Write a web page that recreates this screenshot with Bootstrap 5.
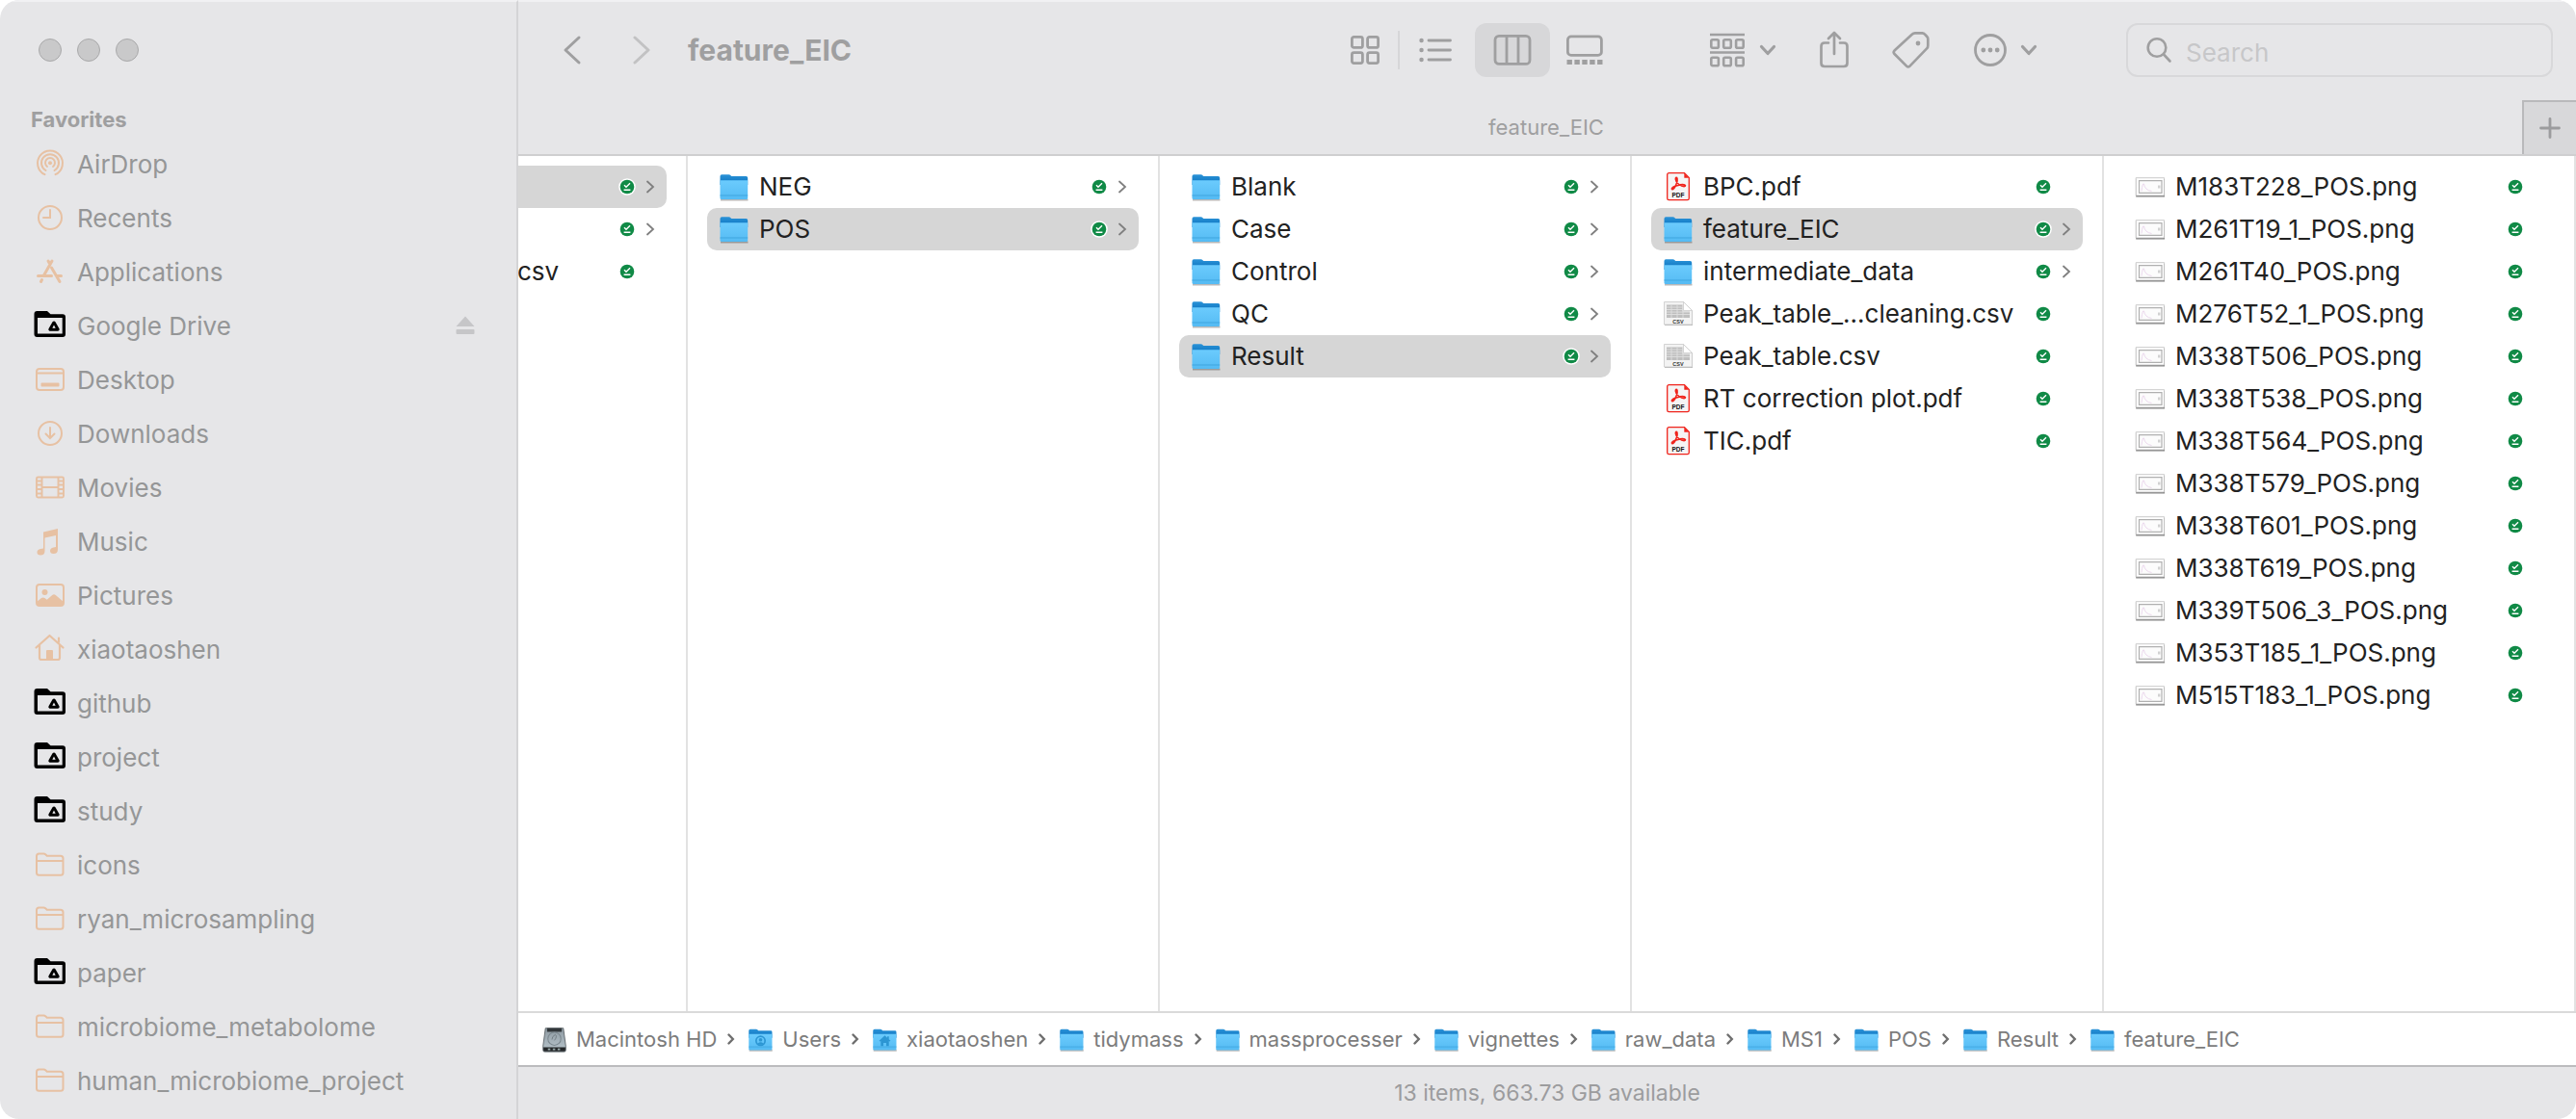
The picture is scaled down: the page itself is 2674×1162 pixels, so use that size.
<!DOCTYPE html>
<html lang="en">
<head>
<meta charset="utf-8">
<meta name="viewport" content="width=device-width, initial-scale=1">
<title>feature_EIC</title>
<link rel="stylesheet" href="https://cdn.jsdelivr.net/npm/bootstrap@5.3.0/dist/css/bootstrap.min.css">
<style>
:root{--chrome:#e6e6e8;--dim:#9f9fa0;--rule:#e2e2e2;--ink:#222;--sel:#d6d6d6}
body{font-family:Inter,"Liberation Sans",sans-serif;background:#fff;color:var(--ink)}
a{text-decoration:none;color:inherit}
svg{display:block;flex:none}
.finder{border-radius:20px;overflow:hidden;background:var(--chrome)}
.side{width:538px;flex:none;border-right:2px solid #d4d4d6;border-top:2px solid #f1f1f3;padding-top:38px}
.lights{padding-left:40px;gap:16px}
.light{width:24px;height:24px;border-radius:50%;background:#c9c9ca;border:1px solid #a9a9aa;padding:0}
.side-title{font-size:22px;line-height:32px;font-weight:700;color:var(--dim);padding-left:32px;margin:44px 0 2px}
.side-item{height:56px;padding-left:35px;gap:11px;font-size:26px;color:#959697}
.side-item svg{width:34px;height:34px;color:#e7c1a3}
.side-item svg.drive{color:#000}
.side-item .eject{padding:0;border:0;background:none;margin:0 43px 0 auto}
.side-item .eject svg{width:20px;height:20px;color:#c6c6c8}
.head{border-top:2px solid #f1f1f3;border-bottom:2px solid #cfcfd0}
.tools{height:102px;padding:0 24px 2px 46px;color:var(--dim)}
.tools button{padding:0;border:0;background:none;color:inherit;height:56px;display:flex;align-items:center;justify-content:center}
.nav-back,.nav-fwd{width:20px}
.nav-fwd{opacity:.5}
.navs{gap:52px}
.loc{font-size:30px;font-weight:700;line-height:40px;margin:0 0 0 38px}
.views{gap:16px;margin-right:108px}
.views .v-grid{width:36px}.views .v-gal{width:40px}
.views .v-list{width:46px;padding-right:5px}
.views .v-col{width:78px;border-radius:12px;background:#d7d7d9}
.sep{width:2px;height:40px;background:#d6d6d8}
.acts{gap:40px;margin-right:92px}
.acts button{gap:13px}
.find{width:443px;height:56px;border:2px solid #d8d8da;border-radius:12px;gap:14px;padding:0 18px}
.find input{border:0;background:none;outline:0;font-size:26px;min-width:0;flex:1;padding:4px 0 0;color:#777}
.find input::placeholder{color:#c7c7c9;opacity:1}
.tabs-bar{height:56px;color:var(--dim)}
.tab-label{font-size:22px;flex:1;text-align:center;padding-left:54px}
.tab-add{width:56px;height:56px;border:0;border-left:2px solid #b9b9bb;border-top:2px solid #b9b9bb;background:#d8d8da;color:#9c9c9e;padding:0;display:grid;place-items:center}
.browser{background:#fff}
.pane{width:490px;flex:none;padding:10px 20px;border-right:2px solid var(--rule)}
.pane-cut{width:176px;padding-left:0}
.pane-last{flex:1;min-width:0}
.rowx{height:44px;padding:0 12px;gap:10px;font-size:26px;border-radius:10px;white-space:nowrap;color:var(--ink)}
.pane-cut .rowx{padding-left:0;border-radius:0 10px 10px 0}
.rowx.on{background:var(--sel)}
.rowx .nm{flex:1;min-width:0;padding-bottom:2px}
.pane-cut .nm{margin-left:-1px}
.rowx .ic{width:32px;height:32px}
.rowx .ok{width:18px;height:18px}
.rowx .go{width:10px;height:14px;color:#7f7f7f}
.pathbar{background:#fff;border-top:2px solid #dadada;border-bottom:2px solid #bcbcbe;height:58px;padding-left:24px;font-size:22px;color:#7c7c7c}
.crumb{gap:9px;white-space:nowrap}
.crumb svg{width:27px;height:27px}
.crumb .sepv{width:8px;height:14px;margin:0 13px 0 2px;color:#6f6f6f}
.status{height:54px;font-size:23px;color:#9c9c9e}
</style>
<script src="https://cdn.jsdelivr.net/npm/bootstrap@5.3.0/dist/js/bootstrap.bundle.min.js"></script>
</head>
<body>
<svg width="0" height="0" class="position-absolute" aria-hidden="true">
<defs>
<linearGradient id="gf" x1="0" y1="0" x2="0" y2="1"><stop offset="0" stop-color="#6bcbfd"/><stop offset="1" stop-color="#55bbf3"/></linearGradient>
<linearGradient id="gb" x1="0" y1="0" x2="0" y2="1"><stop offset="0" stop-color="#2b93d8"/><stop offset="1" stop-color="#0870bd"/></linearGradient>
<linearGradient id="gh" x1="0" y1="0" x2="0" y2="1"><stop offset="0" stop-color="#8e9aa2"/><stop offset="1" stop-color="#b9c6cd"/></linearGradient>
<symbol id="folder" viewBox="0 0 32 32"><path d="M2 29.500h28.500" stroke="#000" stroke-opacity=".28" stroke-width="2"/><path d="M1.500 5q0-1.800 1.800-1.800h7.200q1.200 0 2 1l.8.9h15.200q1.700 0 1.700 1.600V14h-28.700z" fill="url(#gb)"/><path d="M1.500 9.300h28.700V27.500q0 1.500-1.500 1.500H3q-1.500 0-1.500-1.500z" fill="url(#gf)"/><path d="M1.500 25h28.700" stroke="#3fa5df" stroke-width="1"/></symbol>
<symbol id="f-user" viewBox="0 0 32 32"><use href="#folder"/><circle cx="16" cy="17.500" r="5.500" fill="none" stroke="#2c96d3" stroke-width="2"/><circle cx="16" cy="16.300" r="2.200" fill="#2c96d3"/><path d="M12.500 21q3.500-3.500 7 0-3.500 2.500-7 0z" fill="#2c96d3"/></symbol>
<symbol id="f-home" viewBox="0 0 32 32"><use href="#folder"/><path d="M9 17.500l7-6.500 3 2.800V12h2v3.600l2 1.900-1 1-1-.8V24h-3.200v-4h-3.600v4H11v-6.300l-1 .8z" fill="#2c96d3"/></symbol>
<symbol id="hd" viewBox="0 0 32 32"><path d="M5 2h22l3 22v5q0 2-2 2H4q-2 0-2-2v-5z" fill="url(#gh)" stroke="#555c61"/><path d="M7 2h18v4.500H7z" fill="#32373a"/><circle cx="16" cy="15" r="8" fill="none" stroke="#7b878e" stroke-width="1.200"/><path d="M16 17q4-5 1-7-4 2-4 6" fill="none" stroke="#6c777d"/><path d="M2.500 25.500h27V29q0 1.500-1.500 1.500H4q-1.500 0-1.500-1.500z" fill="#25282a"/><path d="M8 28h3m3 0h3m3 0h3" stroke="#9aa" stroke-width="2"/></symbol>
<symbol id="pdf" viewBox="0 0 32 32"><path d="M6.500 1.700H22.500L27.300 6.500V28q0 1.700-1.700 1.700H6.400q-1.700 0-1.700-1.700V3.400q0-1.700 1.800-1.700z" fill="#f6f4f4" stroke="#f0231b" stroke-width="1.300"/><path d="M22.300 2v4.700H27z" fill="#f0231b"/><path d="M14.600 6.500q-1.500-.5-1.200 1.800.9 4.500 6.800 7 3.200.8 3.300-.6-.5-1.600-5.500-.8-4.500.6-7.500 2.600-1.800 1.500-.7 2.200 1.800.2 3.600-4 2.700-6 1.200-8.200z" fill="none" stroke="#f0231b" stroke-width="1.600"/><text x="16" y="26.800" font-family="Liberation Sans,sans-serif" font-size="6.500" font-weight="700" text-anchor="middle" fill="#111">PDF</text></symbol>
<symbol id="csv" viewBox="0 0 32 32"><path d="M2 4h20l9 9v15H2z" fill="#000" opacity=".28"/><path d="M1.500 3.500h20l9 9V27h-29z" fill="#f3f3f3" stroke="#c9c9c9" stroke-width=".8"/><path d="M4 6.500h16.500v7H28V20H4z" fill="#bfbfbf"/><path d="M4 9h17M4 11.500h17M4 14h24M4 16.500h24M9 6.500V20m6-13.500V20m6-13.500V20" stroke="#e0e0e0" stroke-width=".9"/><path d="M21.500 3.500l9 9h-9z" fill="#fff" stroke="#c6c6c6" stroke-width=".7"/><text x="16" y="25.600" font-family="Liberation Sans,sans-serif" font-size="5.500" font-weight="700" text-anchor="middle" fill="#333">CSV</text></symbol>
<symbol id="png" viewBox="0 0 32 32"><path d="M1.200 8h29.800v18.500H1.200z" fill="#000" opacity=".5"/><path d="M1.200 6.700h29.400V25H1.200z" fill="#fff" stroke="#bdbdbd" stroke-width=".8"/><path d="M4.500 9.700H28v12.600H4.500z" fill="#fcfcfc" stroke="#b0b0b0" stroke-width="1.200"/><path d="M7 20.500q1-9 2.500-7.500 1 6.500 8 7.500" fill="none" stroke="#ecd9ee"/><path d="M24 14.500h2.500v3H24z" fill="#d2d2d2"/></symbol>
<symbol id="ok" viewBox="0 0 18 18"><circle cx="9" cy="9" r="8.800" fill="#fff"/><circle cx="9" cy="9" r="7.300" fill="#108a46"/><path d="M6 7.300l2 2L12 5.300M5.600 12.300h6.800" fill="none" stroke="#fff" stroke-width="1.400"/></symbol>
<symbol id="go" viewBox="0 0 10 14"><path d="M2 1.500L8 7l-6 5.500" fill="none" stroke="currentColor" stroke-width="1.800" stroke-linecap="round"/></symbol>
<symbol id="crumbgo" viewBox="0 0 8 14"><path d="M1.500 2.500L5.800 7l-4.300 4.500" fill="none" stroke="currentColor" stroke-width="2.400" stroke-linecap="round"/></symbol>
<symbol id="chev" viewBox="0 0 18 12"><path d="M2.500 2.500L9 9.500l6.500-7" fill="none" stroke="currentColor" stroke-width="3.200" stroke-linecap="round" stroke-linejoin="round"/></symbol>
<symbol id="drive" viewBox="0 0 34 34"><path d="M3.500 2h10.500l3.500 3.200h12.500q3 0 3 3V26q0 3-3 3H3.500Q.5 29 .5 26V5q0-3 3-3zM4 9v16.500h25.700V9z" fill="currentColor" fill-rule="evenodd"/><path d="M21 14.200l-4 6.800h8z" fill="none" stroke="currentColor" stroke-width="3.400" stroke-linejoin="round"/><path d="M21 16.600l-1.700 3.100h3.400z" fill="#e6e6e8"/></symbol>
<symbol id="sfold" viewBox="0 0 34 34"><path d="M3 10.500V8q0-2.500 2.500-2.500h4.600q1.400 0 2.400 1l1.300 1.300h14q2.700 0 2.700 2.700v14.800q0 2.500-2.500 2.500H5.500Q3 27.800 3 25.300zM3 13h27.500" fill="none" stroke="currentColor" stroke-width="2"/></symbol>
<symbol id="airdrop" viewBox="0 0 34 34"><g fill="none" stroke="currentColor" stroke-width="2" stroke-linecap="round"><path d="M11.500 28.200a13 13 0 1 1 11 0M12.500 24a9 9 0 1 1 9 0M14 20a5 5 0 1 1 6 0"/></g><circle cx="17" cy="16.200" r="2" fill="currentColor"/></symbol>
<symbol id="recent" viewBox="0 0 34 34"><circle cx="17" cy="17" r="12" fill="none" stroke="currentColor" stroke-width="2"/><path d="M17 9v8h-7" fill="none" stroke="currentColor" stroke-width="2" stroke-linecap="round"/></symbol>
<symbol id="apps" viewBox="0 0 34 34"><g stroke="currentColor" stroke-width="3" stroke-linecap="round" fill="none"><path d="M19 6l-8.500 15M15 6l2 3.500M4.500 21.500h14M24 21.500h4.500M18.500 13l8.500 14.500M8.500 25.500l-1 2"/></g></symbol>
<symbol id="desk" viewBox="0 0 34 34"><rect x="3" y="6" width="28" height="22" rx="3" fill="none" stroke="currentColor" stroke-width="2"/><path d="M3 10.500h28" stroke="currentColor" stroke-width="2"/><rect x="7.500" y="20.500" width="19" height="4" rx="1" fill="currentColor"/></symbol>
<symbol id="down" viewBox="0 0 34 34"><circle cx="17" cy="17" r="12" fill="none" stroke="currentColor" stroke-width="2"/><path d="M17 11v11m-4.500-4.500L17 22l4.500-4.500" fill="none" stroke="currentColor" stroke-width="2" stroke-linecap="round"/></symbol>
<symbol id="movie" viewBox="0 0 34 34"><path d="M4.500 6.500h25q1.500 0 1.500 1.500v18q0 1.500-1.500 1.500h-25Q3 27.500 3 26V8q0-1.500 1.500-1.500zM8.500 6.500v21m17-21v21M8.500 17h17M3 10.500h5.500M3 14.500h5.500M3 19h5.500M3 23.500h5.500m17-13H31m-5.500 4H31M25.500 19H31m-5.500 4.500H31" fill="none" stroke="currentColor" stroke-width="1.900"/></symbol>
<symbol id="music" viewBox="0 0 34 34"><path d="M10 7.500L25 4v21.500q0 4.500-4.500 4.500-3.500 0-3.500-3 0-3 3.500-3.500l2.500-.5V11l-11.500 2.500V27q0 4.500-4.500 4.500-3.500 0-3.500-3 0-3 3.500-3.500L10 24.500z" fill="currentColor"/></symbol>
<symbol id="pict" viewBox="0 0 34 34"><rect x="3" y="6" width="28" height="22" rx="3" fill="none" stroke="currentColor" stroke-width="2"/><circle cx="11.500" cy="14" r="3" fill="currentColor"/><path d="M3 24l5-4q1.700-1.200 3.400 0l2.300 1.700 5.500-4.700q1.800-1.300 3.600 0L31 24v3q0 1-2 1H5q-2 0-2-1z" fill="currentColor"/></symbol>
<symbol id="home" viewBox="0 0 34 34"><path d="M2.500 15.500L16.500 3l14 12.500M6 13v13q0 2 2 2h17q2 0 2-2V13m-1-3V5.500" fill="none" stroke="currentColor" stroke-width="2.200" stroke-linecap="round" stroke-linejoin="round"/><path d="M13 28v-9q0-1 1-1h5q1 0 1 1v9z" fill="currentColor"/></symbol>
<symbol id="eject" viewBox="0 0 20 20"><path d="M10 .5l9.500 10.500H.5zM1.500 14h17q1 0 1 1v3q0 1-1 1h-17q-1 0-1-1v-3q0-1 1-1z" fill="currentColor"/></symbol>
</defs>
</svg>
<div class="finder d-flex min-vh-100">
<nav class="side" aria-label="Favorites">
<div class="lights d-flex"><button class="light" aria-label="Close"></button><button class="light" aria-label="Minimize"></button><button class="light" aria-label="Zoom"></button></div>
<h2 class="side-title">Favorites</h2>
<div class="d-flex flex-column">
<a href="#" class="side-item d-flex align-items-center"><svg><use href="#airdrop"/></svg>AirDrop</a>
<a href="#" class="side-item d-flex align-items-center"><svg><use href="#recent"/></svg>Recents</a>
<a href="#" class="side-item d-flex align-items-center"><svg><use href="#apps"/></svg>Applications</a>
<div class="side-item d-flex align-items-center"><svg class="drive"><use href="#drive"/></svg><a href="#">Google Drive</a><button class="eject" aria-label="Eject"><svg><use href="#eject"/></svg></button></div>
<a href="#" class="side-item d-flex align-items-center"><svg><use href="#desk"/></svg>Desktop</a>
<a href="#" class="side-item d-flex align-items-center"><svg><use href="#down"/></svg>Downloads</a>
<a href="#" class="side-item d-flex align-items-center"><svg><use href="#movie"/></svg>Movies</a>
<a href="#" class="side-item d-flex align-items-center"><svg><use href="#music"/></svg>Music</a>
<a href="#" class="side-item d-flex align-items-center"><svg><use href="#pict"/></svg>Pictures</a>
<a href="#" class="side-item d-flex align-items-center"><svg><use href="#home"/></svg>xiaotaoshen</a>
<a href="#" class="side-item d-flex align-items-center"><svg class="drive"><use href="#drive"/></svg>github</a>
<a href="#" class="side-item d-flex align-items-center"><svg class="drive"><use href="#drive"/></svg>project</a>
<a href="#" class="side-item d-flex align-items-center"><svg class="drive"><use href="#drive"/></svg>study</a>
<a href="#" class="side-item d-flex align-items-center"><svg><use href="#sfold"/></svg>icons</a>
<a href="#" class="side-item d-flex align-items-center"><svg><use href="#sfold"/></svg>ryan_microsampling</a>
<a href="#" class="side-item d-flex align-items-center"><svg class="drive"><use href="#drive"/></svg>paper</a>
<a href="#" class="side-item d-flex align-items-center"><svg><use href="#sfold"/></svg>microbiome_metabolome</a>
<a href="#" class="side-item d-flex align-items-center"><svg><use href="#sfold"/></svg>human_microbiome_project</a>
</div>
</nav>
<main class="d-flex flex-column flex-grow-1 overflow-hidden">
<header class="head">
<div class="tools d-flex align-items-center">
<div class="d-flex align-items-center flex-grow-1">
<div class="navs d-flex">
<button class="nav-back" aria-label="Back"><svg width="20" height="32" viewBox="0 0 20 32" fill="none" stroke="currentColor" stroke-width="3" stroke-linecap="round" stroke-linejoin="round"><path d="M17 3L3 16l14 13"/></svg></button>
<button class="nav-fwd" aria-label="Forward"><svg width="20" height="32" viewBox="0 0 20 32" fill="none" stroke="currentColor" stroke-width="3" stroke-linecap="round" stroke-linejoin="round"><path d="M3 3l14 13L3 29"/></svg></button>
</div>
<h1 class="loc">feature_EIC</h1>
</div>
<div class="views d-flex align-items-center">
<button class="v-grid" aria-label="Icons"><svg width="32" height="32" viewBox="0 0 32 32" fill="none" stroke="currentColor" stroke-width="2.800"><rect x="2.400" y="2.400" width="11" height="11" rx="2"/><rect x="18.600" y="2.400" width="11" height="11" rx="2"/><rect x="2.400" y="18.600" width="11" height="11" rx="2"/><rect x="18.600" y="18.600" width="11" height="11" rx="2"/></svg></button>
<span class="sep"></span>
<button class="v-list" aria-label="List"><svg width="34" height="28" viewBox="0 0 34 28" stroke="currentColor" stroke-width="2.800" stroke-linecap="round" fill="none"><path d="M10 4h22.500M10 14h22.500M10 24h22.500"/><path d="M2.500 4h.1M2.500 14h.1M2.500 24h.1" stroke-width="4.400"/></svg></button>
<button class="v-col" aria-label="Columns" aria-pressed="true"><svg width="40" height="34" viewBox="0 0 40 34" fill="none" stroke="currentColor" stroke-width="2.800"><rect x="2" y="2.400" width="36" height="29" rx="4"/><path d="M14 3v28M26 3v28"/></svg></button>
<button class="v-gal" aria-label="Gallery"><svg width="40" height="34" viewBox="0 0 40 34" fill="none" stroke="currentColor" stroke-width="2.800"><rect x="2.400" y="2.900" width="35" height="19.500" rx="3.500"/><path d="M1.500 29.500h37" stroke-width="5" stroke-dasharray="5.400 2.500"/></svg></button>
</div>
<div class="acts d-flex align-items-center">
<button aria-label="Group"><svg width="40" height="38" viewBox="0 0 40 38" fill="none" stroke="currentColor" stroke-width="2.600"><path d="M2 3h36M2 21.500h36"/><rect x="3.300" y="8.300" width="7.600" height="8.400" rx="1.500"/><rect x="16.200" y="8.300" width="7.600" height="8.400" rx="1.500"/><rect x="29.100" y="8.300" width="7.600" height="8.400" rx="1.500"/><rect x="3.300" y="26.800" width="7.600" height="8.400" rx="1.500"/><rect x="16.200" y="26.800" width="7.600" height="8.400" rx="1.500"/><rect x="29.100" y="26.800" width="7.600" height="8.400" rx="1.500"/></svg><svg width="18" height="12"><use href="#chev"/></svg></button>
<button aria-label="Share"><svg width="40" height="42" viewBox="0 0 40 42" fill="none" stroke="currentColor" stroke-width="2.700" stroke-linecap="round" stroke-linejoin="round"><path d="M14 13.500H10q-3.500 0-3.500 3.500v17.500q0 3.500 3.500 3.500h20q3.500 0 3.500-3.500V17q0-3.500-3.500-3.500h-4M20 25V3m-6 6l6-6 6 6"/></svg></button>
<button aria-label="Tags"><svg width="40" height="42" viewBox="0 0 40 42" fill="none" stroke="currentColor" stroke-width="2.700" stroke-linejoin="round"><path d="M21 4.500q1.200-1.200 2.800-1.200h7.700q1.500 0 2.300 1L36.300 7q1 1 1 2.500v7q0 1.700-1.200 2.900L18.500 37.600q-1.700 1.700-3.400 0L2.500 25q-1.700-1.700 0-3.400z"/><circle cx="27" cy="14" r="2.400" fill="currentColor" stroke="none"/></svg></button>
<button aria-label="More"><svg width="40" height="40" viewBox="0 0 40 40" fill="none" stroke="currentColor" stroke-width="2.800"><circle cx="22" cy="20" r="15.500"/><g fill="currentColor" stroke="none"><circle cx="14.800" cy="20" r="2.400"/><circle cx="22" cy="20" r="2.400"/><circle cx="29.200" cy="20" r="2.400"/></g></svg><svg width="18" height="12"><use href="#chev"/></svg></button>
</div>
<label class="find d-flex align-items-center"><svg width="28" height="28" viewBox="0 0 28 28" fill="none" stroke="currentColor" stroke-width="2.600" stroke-linecap="round"><circle cx="12" cy="11.500" r="9.300"/><path d="M19 18.500l6.500 7"/></svg><input type="search" placeholder="Search" aria-label="Search"></label>
</div>
<div class="tabs-bar d-flex align-items-center"><div class="tab-label">feature_EIC</div><button class="tab-add" aria-label="New tab"><svg width="22" height="22" viewBox="0 0 22 22" stroke="currentColor" stroke-width="2.800" stroke-linecap="round"><path d="M11 1.500v19M1.500 11h19"/></svg></button></div>
</header>
<div class="browser d-flex flex-grow-1 overflow-hidden">
<div class="pane pane-cut">
<a href="#" class="rowx on d-flex align-items-center"><span class="nm"></span><svg class="ok"><use href="#ok"/></svg><svg class="go"><use href="#go"/></svg></a>
<a href="#" class="rowx d-flex align-items-center"><span class="nm"></span><svg class="ok"><use href="#ok"/></svg><svg class="go"><use href="#go"/></svg></a>
<a href="#" class="rowx d-flex align-items-center"><span class="nm">csv</span><svg class="ok"><use href="#ok"/></svg><svg class="go"></svg></a>
</div>
<div class="pane">
<a href="#" class="rowx d-flex align-items-center"><svg class="ic"><use href="#folder"/></svg><span class="nm">NEG</span><svg class="ok"><use href="#ok"/></svg><svg class="go"><use href="#go"/></svg></a>
<a href="#" class="rowx on d-flex align-items-center"><svg class="ic"><use href="#folder"/></svg><span class="nm">POS</span><svg class="ok"><use href="#ok"/></svg><svg class="go"><use href="#go"/></svg></a>
</div>
<div class="pane">
<a href="#" class="rowx d-flex align-items-center"><svg class="ic"><use href="#folder"/></svg><span class="nm">Blank</span><svg class="ok"><use href="#ok"/></svg><svg class="go"><use href="#go"/></svg></a>
<a href="#" class="rowx d-flex align-items-center"><svg class="ic"><use href="#folder"/></svg><span class="nm">Case</span><svg class="ok"><use href="#ok"/></svg><svg class="go"><use href="#go"/></svg></a>
<a href="#" class="rowx d-flex align-items-center"><svg class="ic"><use href="#folder"/></svg><span class="nm">Control</span><svg class="ok"><use href="#ok"/></svg><svg class="go"><use href="#go"/></svg></a>
<a href="#" class="rowx d-flex align-items-center"><svg class="ic"><use href="#folder"/></svg><span class="nm">QC</span><svg class="ok"><use href="#ok"/></svg><svg class="go"><use href="#go"/></svg></a>
<a href="#" class="rowx on d-flex align-items-center"><svg class="ic"><use href="#folder"/></svg><span class="nm">Result</span><svg class="ok"><use href="#ok"/></svg><svg class="go"><use href="#go"/></svg></a>
</div>
<div class="pane">
<a href="#" class="rowx d-flex align-items-center"><svg class="ic"><use href="#pdf"/></svg><span class="nm">BPC.pdf</span><svg class="ok"><use href="#ok"/></svg><svg class="go"></svg></a>
<a href="#" class="rowx on d-flex align-items-center"><svg class="ic"><use href="#folder"/></svg><span class="nm">feature_EIC</span><svg class="ok"><use href="#ok"/></svg><svg class="go"><use href="#go"/></svg></a>
<a href="#" class="rowx d-flex align-items-center"><svg class="ic"><use href="#folder"/></svg><span class="nm">intermediate_data</span><svg class="ok"><use href="#ok"/></svg><svg class="go"><use href="#go"/></svg></a>
<a href="#" class="rowx d-flex align-items-center"><svg class="ic"><use href="#csv"/></svg><span class="nm">Peak_table_...cleaning.csv</span><svg class="ok"><use href="#ok"/></svg><svg class="go"></svg></a>
<a href="#" class="rowx d-flex align-items-center"><svg class="ic"><use href="#csv"/></svg><span class="nm">Peak_table.csv</span><svg class="ok"><use href="#ok"/></svg><svg class="go"></svg></a>
<a href="#" class="rowx d-flex align-items-center"><svg class="ic"><use href="#pdf"/></svg><span class="nm">RT correction plot.pdf</span><svg class="ok"><use href="#ok"/></svg><svg class="go"></svg></a>
<a href="#" class="rowx d-flex align-items-center"><svg class="ic"><use href="#pdf"/></svg><span class="nm">TIC.pdf</span><svg class="ok"><use href="#ok"/></svg><svg class="go"></svg></a>
</div>
<div class="pane pane-last">
<a href="#" class="rowx d-flex align-items-center"><svg class="ic"><use href="#png"/></svg><span class="nm">M183T228_POS.png</span><svg class="ok"><use href="#ok"/></svg><svg class="go"></svg></a>
<a href="#" class="rowx d-flex align-items-center"><svg class="ic"><use href="#png"/></svg><span class="nm">M261T19_1_POS.png</span><svg class="ok"><use href="#ok"/></svg><svg class="go"></svg></a>
<a href="#" class="rowx d-flex align-items-center"><svg class="ic"><use href="#png"/></svg><span class="nm">M261T40_POS.png</span><svg class="ok"><use href="#ok"/></svg><svg class="go"></svg></a>
<a href="#" class="rowx d-flex align-items-center"><svg class="ic"><use href="#png"/></svg><span class="nm">M276T52_1_POS.png</span><svg class="ok"><use href="#ok"/></svg><svg class="go"></svg></a>
<a href="#" class="rowx d-flex align-items-center"><svg class="ic"><use href="#png"/></svg><span class="nm">M338T506_POS.png</span><svg class="ok"><use href="#ok"/></svg><svg class="go"></svg></a>
<a href="#" class="rowx d-flex align-items-center"><svg class="ic"><use href="#png"/></svg><span class="nm">M338T538_POS.png</span><svg class="ok"><use href="#ok"/></svg><svg class="go"></svg></a>
<a href="#" class="rowx d-flex align-items-center"><svg class="ic"><use href="#png"/></svg><span class="nm">M338T564_POS.png</span><svg class="ok"><use href="#ok"/></svg><svg class="go"></svg></a>
<a href="#" class="rowx d-flex align-items-center"><svg class="ic"><use href="#png"/></svg><span class="nm">M338T579_POS.png</span><svg class="ok"><use href="#ok"/></svg><svg class="go"></svg></a>
<a href="#" class="rowx d-flex align-items-center"><svg class="ic"><use href="#png"/></svg><span class="nm">M338T601_POS.png</span><svg class="ok"><use href="#ok"/></svg><svg class="go"></svg></a>
<a href="#" class="rowx d-flex align-items-center"><svg class="ic"><use href="#png"/></svg><span class="nm">M338T619_POS.png</span><svg class="ok"><use href="#ok"/></svg><svg class="go"></svg></a>
<a href="#" class="rowx d-flex align-items-center"><svg class="ic"><use href="#png"/></svg><span class="nm">M339T506_3_POS.png</span><svg class="ok"><use href="#ok"/></svg><svg class="go"></svg></a>
<a href="#" class="rowx d-flex align-items-center"><svg class="ic"><use href="#png"/></svg><span class="nm">M353T185_1_POS.png</span><svg class="ok"><use href="#ok"/></svg><svg class="go"></svg></a>
<a href="#" class="rowx d-flex align-items-center"><svg class="ic"><use href="#png"/></svg><span class="nm">M515T183_1_POS.png</span><svg class="ok"><use href="#ok"/></svg><svg class="go"></svg></a>
</div>
</div>
<nav class="pathbar d-flex align-items-center" aria-label="Path">
<a href="#" class="crumb d-flex align-items-center"><svg><use href="#hd"/></svg>Macintosh HD<svg class="sepv"><use href="#crumbgo"/></svg></a>
<a href="#" class="crumb d-flex align-items-center"><svg><use href="#f-user"/></svg>Users<svg class="sepv"><use href="#crumbgo"/></svg></a>
<a href="#" class="crumb d-flex align-items-center"><svg><use href="#f-home"/></svg>xiaotaoshen<svg class="sepv"><use href="#crumbgo"/></svg></a>
<a href="#" class="crumb d-flex align-items-center"><svg><use href="#folder"/></svg>tidymass<svg class="sepv"><use href="#crumbgo"/></svg></a>
<a href="#" class="crumb d-flex align-items-center"><svg><use href="#folder"/></svg>massprocesser<svg class="sepv"><use href="#crumbgo"/></svg></a>
<a href="#" class="crumb d-flex align-items-center"><svg><use href="#folder"/></svg>vignettes<svg class="sepv"><use href="#crumbgo"/></svg></a>
<a href="#" class="crumb d-flex align-items-center"><svg><use href="#folder"/></svg>raw_data<svg class="sepv"><use href="#crumbgo"/></svg></a>
<a href="#" class="crumb d-flex align-items-center"><svg><use href="#folder"/></svg>MS1<svg class="sepv"><use href="#crumbgo"/></svg></a>
<a href="#" class="crumb d-flex align-items-center"><svg><use href="#folder"/></svg>POS<svg class="sepv"><use href="#crumbgo"/></svg></a>
<a href="#" class="crumb d-flex align-items-center"><svg><use href="#folder"/></svg>Result<svg class="sepv"><use href="#crumbgo"/></svg></a>
<a href="#" class="crumb d-flex align-items-center"><svg><use href="#folder"/></svg>feature_EIC</a>
</nav>
<footer class="status d-flex align-items-center justify-content-center">13 items, 663.73 GB available</footer>
</main>
</div>
</body>
</html>
